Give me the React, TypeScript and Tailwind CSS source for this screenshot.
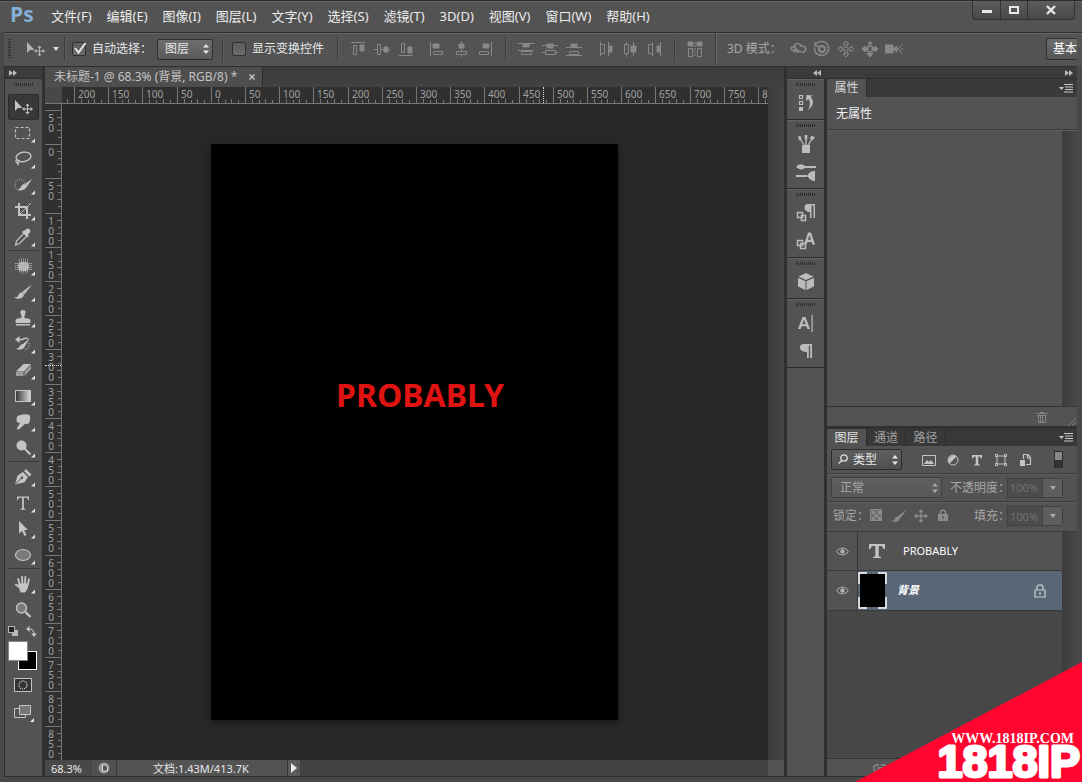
import React, { useState } from 'react';

const menus = ['文件(F)', '编辑(E)', '图像(I)', '图层(L)', '文字(Y)', '选择(S)', '滤镜(T)', '3D(D)', '视图(V)', '窗口(W)', '帮助(H)'];

const topMarks = [200, 150, 100, 50, 0, 50, 100, 150, 200, 250, 300, 350, 400, 450, 500, 550, 600, 650, 700, 750, 800];
const sideMarks = [50, 0, 50, 100, 150, 200, 250, 300, 350, 400, 450, 500, 550, 600, 650, 700, 750, 800, 850];

interface ToolDef {
    name: string;
    icon: React.ReactNode;
    single?: boolean;
}

const moveCross = (
    <path d="M14.5 6.500l2 2.500h-1.500v2.500h2.500V10l2.500 2-2.500 2v-1.500h-2.500V15h1.500l-2 2.500-2-2.500H14v-2.500h-2.500V14L9 12l2.500-2v1.500H14V9h-1.500z" />
);

const toolGroups: ToolDef[][] = [
    [
        { name: '移动', single: true, icon: <><path d="M2 3v11l3-3h4.500z" />{moveCross}</> },
        { name: '矩形选框', icon: <path d="M2.500 4.500h14v11h-14z" fill="none" stroke="currentColor" strokeWidth="1.200" strokeDasharray="3 2" /> },
        {
            name: '套索',
            icon: <g fill="none" stroke="currentColor" strokeWidth="1.400"><ellipse cx="10.500" cy="8" rx="7.500" ry="4.700" transform="rotate(-10 10 8)" /><path d="M4 11c-2 1-1 3 .8 2.600s2-2.400 0-2.400M5 13.500c.8 1 .2 2-.6 2.500" /></g>,
        },
        {
            name: '快速选择',
            icon: <><ellipse cx="7" cy="10" rx="5" ry="5.500" fill="none" stroke="currentColor" strokeDasharray="1 1.300" /><path d="M19 4l-7 5 2 2.500zM11.500 9c-2 0-3.500 2-4 4-1 1-2 1-3 .9 2 2 7.500 2 9.500-2.600z" /></>,
        },
        {
            name: '裁剪',
            icon: <><path d="M6 2v12h12M2 6h12v12" fill="none" stroke="currentColor" strokeWidth="2" /><path d="M7 13L18 2" stroke="currentColor" /></>,
        },
        {
            name: '吸管',
            icon: <><path d="M11 6l3 3-7.500 7.500-4 1.500 1-4z" fill="none" stroke="currentColor" strokeWidth="1.200" /><path d="M10 4l1.500-.5L14 1.800c2-.8 4 1.200 3.200 3.200L15 7.500l.8 1.500-1.300 1.300L9 5z" /></>,
        },
    ],
    [
        {
            name: '污点修复',
            icon: <><rect x="5" y="6" width="11" height="9" rx="4" fillOpacity=".8" /><path d="M6.500 3v14M8.500 2.500v15M10.500 2.500v15M12.500 2.500v15M14.500 3v14M2 7.500h17M2 9.500h17M2 11.500h17M2 13.500h17" stroke="currentColor" strokeWidth=".7" strokeDasharray="1.500 .5" /></>,
        },
        { name: '画笔', icon: <path d="M19 2.500l-10 7.500 2.300 2.500zM9 10.500c-2.500 0-3.500 2-4 3.500-1 1.400-2.200 1.300-4 1.200 2.800 2.500 9 2 10-2.400z" /> },
        { name: '仿制图章', icon: <path d="M10 2c1.800 0 2.900 1.300 2.600 3-.3 1.500-1.200 2.500-1.200 4.500 1 1.200 6 .8 6 2.500v3H2.600v-3c0-1.700 5-1.300 6-2.500 0-2-.9-3-1.200-4.500C7.100 3.300 8.200 2 10 2zM3 16h14v1.400H3z" /> },
        {
            name: '历史记录画笔',
            icon: <><path d="M17 4l-7 6 2 2zM10 10c-2 0-3.500 2-4 3.500-1 1-2 1.200-3 1.100 2 2 8 1.400 9-2.600z" /><path d="M5 5.500h4c2-1 4-1.500 6-1" fill="none" stroke="currentColor" strokeWidth="1.500" /><path d="M2 5.500L6.500 2v7z" /><path d="M16 9c1 3-.5 6-4 6.500" fill="none" stroke="currentColor" strokeDasharray="1 1" /></>,
        },
        {
            name: '橡皮擦',
            icon: <><path d="M3 11.500L10.500 4h7.500L11 11.500z" /><path d="M3 12v4h7.500v-4zM11.500 12v4L18 9V5z" fillOpacity=".65" /></>,
        },
        {
            name: '渐变',
            icon: <><defs><linearGradient id="tool-grad"><stop offset="0" stopColor="#333" /><stop offset="1" stopColor="#ddd" /></linearGradient></defs><rect x="2.500" y="4.500" width="15" height="11" fill="url(#tool-grad)" stroke="currentColor" /></>,
        },
        { name: '涂抹', icon: <path d="M4 5c2-3 10-3.500 12.500-2 1 2 1 5-.5 8-1 1.500-3 1-4 .8L6 17.500 3.500 17l4-6.500c-1 1-2.500 1-2.800-.4C3.200 9.500 3 8 4 7.500 3.300 7 3.300 6 4 5z" /> },
        { name: '减淡', icon: <><circle cx="8.500" cy="7.500" r="5" /><path d="M11.500 10.500l6 6" stroke="currentColor" strokeWidth="2" /></> },
    ],
    [
        {
            name: '钢笔',
            icon: <><path d="M2 17.500l2.500-9L10 5l5 5-3.500 5.300zM11 4l2-2 5.500 5.500-2 2z" /><path d="M2.500 17l5.500-5.500" stroke="#535353" /><circle cx="8.800" cy="10.800" r="1.400" fill="#535353" /></>,
        },
        { name: '横排文字', icon: <path d="M4 3.500h12v3.800h-.9c-.3-2-1-2.500-2.300-2.500h-1.900v9.700c0 1 .4 1.300 1.800 1.400v.8H7.300v-.8c1.400-.1 1.800-.4 1.800-1.400V4.800H7.200c-1.300 0-2 .5-2.300 2.500H4z" /> },
        { name: '路径选择', icon: <path d="M6 2v12.500l3-2.600 2.500 5 2-1-2.400-4.900H15z" /> },
        { name: '椭圆', icon: <ellipse cx="10" cy="10" rx="7.500" ry="5.500" fillOpacity=".35" stroke="currentColor" strokeWidth="1.200" /> },
    ],
    [
        {
            name: '抓手',
            icon: <g stroke="currentColor" strokeLinecap="round"><path d="M6 10h9l-1 5-2 3H8z" /><path d="M7 11L5.200 5M9.500 10L9 3M12 10l.4-7M14.500 11L16 5.500M7.500 14L2.800 10.500" strokeWidth="1.900" /></g>,
        },
        { name: '缩放', single: true, icon: <><circle cx="8.500" cy="8" r="5" fillOpacity=".35" stroke="currentColor" strokeWidth="1.400" /><path d="M12.500 12l5 5" stroke="currentColor" strokeWidth="2.400" /></> },
    ],
];

const ToolButton: React.FC<{ tool: ToolDef; active: boolean; onClick: () => void }> = ({ tool, active, onClick }) => (
    <button
        type="button"
        aria-label={tool.name}
        onClick={onClick}
        className={`block h-[26px] w-[31px] rounded-xs border ${active ? 'border-[#2c2c2c] bg-[#383838]' : 'border-transparent'}`}
    >
        <svg viewBox="0 0 30 26" className="-mt-px h-[26px] w-[30px] text-[#c4c4c4]" fill="currentColor">
            <g transform="translate(4 3)">{tool.icon}</g>
            {!tool.single && <path d="M26 18.500v4h-4z" fill="#e4e4e4" />}
        </svg>
    </button>
);

const Grip = () => (
    <div className="mx-auto h-[3px] w-5 bg-[repeating-linear-gradient(90deg,#2e2e2e_0_1px,transparent_1px_2px)]" />
);

const Divider = () => <div className="h-6 w-px shrink-0 bg-[#3c3c3c] shadow-[1px_0_0_#5e5e5e]" />;

const Arrows = () => (
    <svg viewBox="0 0 6 10" className="pointer-events-none absolute top-1/2 right-1 h-[10px] w-[6px] -translate-y-1/2" fill="currentColor">
        <path d="M3 0l3 3.500H0zM3 10L0 6.500h6z" />
    </svg>
);

const MenuGlyph = () => (
    <button type="button" aria-label="面板菜单" className="mr-1 ml-auto text-[#c8c8c8]">
        <svg viewBox="0 0 14 9" className="h-[9px] w-[14px]" fill="currentColor">
            <path d="M0 3h5L2.500 6zM5 0h9v1H5zM6 2.500h8v1H6zM6 5h8v1H6zM5 7.500h9v1H5z" />
        </svg>
    </button>
);

const Check: React.FC<{ label: string; defaultChecked?: boolean }> = ({ label, defaultChecked }) => (
    <label className="flex shrink-0 items-center gap-[6px]">
        <span className="relative flex">
            <input
                type="checkbox"
                defaultChecked={defaultChecked}
                className="peer size-[14px] appearance-none rounded-xs border border-[#2f2f2f] bg-linear-to-b from-[#5c5c5c] to-[#6c6c6c]"
            />
            <svg viewBox="0 0 14 14" className="pointer-events-none absolute inset-0 hidden peer-checked:block">
                <path d="M3 6l3.500 4.500L13.500 1" fill="none" stroke="#e6e6e6" strokeWidth="2" />
            </svg>
        </span>
        {label}
    </label>
);

const alignIcons: Record<string, React.ReactNode> = {
    顶对齐: <><path d="M2 2.500h14M4.500 5.500h3v9h-3z" /><path d="M11 5h4v6h-4z" fill="currentColor" /></>,
    垂直居中: <><path d="M1 9.500h3M8 9.500h9M4.500 4.500h3v10h-3z" /><path d="M11 7h4v5h-4z" fill="currentColor" /></>,
    底对齐: <><path d="M2 15.500h14M4.500 3.500h3v9h-3z" /><path d="M11 7h4v6h-4z" fill="currentColor" /></>,
    左对齐: <><path d="M2.500 2v14M5.500 11.500h9v3h-9z" /><path d="M5 4h6v4H5z" fill="currentColor" /></>,
    水平居中: <><path d="M9.500 1v3M9.500 8v3M9.500 15v2M4.500 11.500h10v3h-10z" /><path d="M7 4h5v4H7z" fill="currentColor" /></>,
    右对齐: <><path d="M15.500 2v14M3.500 11.500h9v3h-9z" /><path d="M7 4h6v4H7z" fill="currentColor" /></>,
    按顶分布: <><path d="M1 3.500h16M1 10.500h16M4.500 11.500h10v3h-10z" /><path d="M6 4h6v3H6z" fill="currentColor" /></>,
    按垂直居中分布: <><path d="M1 5.500h16M1 12.500h3M14 12.500h3M4.500 10.500h10v4h-10z" /><path d="M6 4h6v4H6z" fill="currentColor" /></>,
    按底分布: <><path d="M1 7.500h16M1 15.500h16M4.500 11.500h9v3h-9z" /><path d="M6 4h6v3H6z" fill="currentColor" /></>,
    按左分布: <><path d="M3.500 2v14M11.500 2v14M3.500 4.500h4v9h-4z" /><path d="M12 6h3v6h-3z" fill="currentColor" /></>,
    按水平居中分布: <><path d="M5.500 2v2M5.500 14v3M12.500 2v14M3.500 4.500h4v9h-4z" /><path d="M10 6h5v6h-5z" fill="currentColor" /></>,
    按右分布: <><path d="M7.500 2v14M15.500 2v14M3.500 4.500h4v9h-4z" /><path d="M12 6h3v6h-3z" fill="currentColor" /></>,
    自动对齐: <><path d="M2.500 8.500h4v8h-4zM11.500 8.500h4v8h-4z" /><path d="M2 2h5v4H2zM11 2h5v4h-5z" fill="currentColor" /><path d="M9 2v15" strokeDasharray="2 1" /></>,
};

const IconButton: React.FC<{ label: string; children: React.ReactNode }> = ({ label, children }) => (
    <button type="button" aria-label={label} className="flex w-6 shrink-0 justify-center text-[#888]">
        <svg viewBox="0 0 18 18" className="size-[18px]" fill="none" stroke="currentColor">{children}</svg>
    </button>
);

const AlignGroup: React.FC<{ names: string[] }> = ({ names }) => (
    <div className="flex">
        {names.map(name => <IconButton key={name} label={name}>{alignIcons[name]}</IconButton>)}
    </div>
);

const TitleBar = () => (
    <header className="flex h-8 shrink-0 border-t border-[#2b2b2b] bg-[#535353] shadow-[inset_0_1px_0_#656565]">
        <div className="w-[43px] pl-[10px] font-['Open_Sans',sans-serif] text-[21px] leading-[27px] font-bold text-[#84afd6]">Ps</div>
        <nav className="flex items-center gap-[7px] pl-1 text-[13px] text-[#ececec]">
            {menus.map(menu => (
                <button key={menu} type="button" className="px-1 whitespace-nowrap">{menu}</button>
            ))}
        </nav>
        <div className="mr-[7px] ml-auto flex h-[19px] divide-x divide-[#333] rounded-b-sm border border-t-0 border-[#333] bg-linear-to-b from-[#5c5c5c] to-[#484848] text-[#e8e8e8]">
            <button type="button" aria-label="最小化" className="flex w-[28px] items-center justify-center">
                <svg viewBox="0 0 10 10" className="size-[10px]"><path d="M0 5h10v3H0z" fill="currentColor" /></svg>
            </button>
            <button type="button" aria-label="最大化" className="flex w-[27px] items-center justify-center">
                <svg viewBox="0 0 10 10" className="size-[10px]"><path d="M1 2h8v6H1z" fill="none" stroke="currentColor" strokeWidth="2" /></svg>
            </button>
            <button type="button" aria-label="关闭" className="flex w-[46px] items-center justify-center">
                <svg viewBox="0 0 10 10" className="size-[10px]"><path d="M1 1l8 8M9 1L1 9" stroke="currentColor" strokeWidth="2.400" /></svg>
            </button>
        </div>
    </header>
);

const OptionsBar = () => (
    <div className="ml-[4px] flex h-[34px] shrink-0 items-center overflow-hidden border-t border-[#2f2f2f] bg-[#535353] pb-px text-[12px] text-[#e8e8e8] shadow-[inset_0_1px_0_#666]">
        <div className="ml-1 h-5 w-[3px] bg-[repeating-linear-gradient(#333_0_1px,transparent_1px_2px)]" />
        <button type="button" aria-label="当前工具" className="ml-[14px] flex items-center gap-1 text-[#b4b4b4]">
            <svg viewBox="0 0 20 20" className="size-5" fill="currentColor"><path d="M2 3v11l3-3h4.500z" />{moveCross}</svg>
            <svg viewBox="0 0 6 4" className="ml-1 h-1 w-[6px]" fill="#e0e0e0"><path d="M0 0h6L3 4z" /></svg>
        </button>
        <div className="ml-[5px] flex items-center"><Divider /></div>
        <div className="ml-[7px] w-[85px]"><Check label="自动选择：" defaultChecked /></div>
        <div className="relative">
            <select aria-label="自动选择目标" className="h-[21px] w-14 appearance-none rounded-xs border border-[#2f2f2f] bg-linear-to-b from-[#6e6e6e] to-[#5a5a5a] pl-[7px]">
                <option>图层</option>
                <option>组</option>
            </select>
            <Arrows />
        </div>
        <div className="ml-[9px] flex items-center gap-[9px]">
            <Divider />
            <div className="w-24"><Check label="显示变换控件" /></div>
            <Divider />
        </div>
        <div className="ml-[8px] flex items-center gap-[7px]">
            <AlignGroup names={['顶对齐', '垂直居中', '底对齐']} />
            <AlignGroup names={['左对齐', '水平居中', '右对齐']} />
        </div>
        <div className="ml-2 flex items-center gap-2">
            <Divider />
            <AlignGroup names={['按顶分布', '按垂直居中分布', '按底分布']} />
            <AlignGroup names={['按左分布', '按水平居中分布', '按右分布']} />
            <Divider />
            <AlignGroup names={['自动对齐']} />
            <div className="h-8 w-px bg-[#3c3c3c] shadow-[1px_0_0_#666]" />
        </div>
        <span className="ml-[11px] w-[59px] shrink-0 whitespace-nowrap text-[#a8a8a8]">3D 模式：</span>
        <div className="flex">
            <IconButton label="旋转 3D 对象">
                <path d="M6 11C-1 9 3 6 5.500 7 5 3 11 2 11.500 6c4-1 7 3 4 5.500-3 2-7-.5-9-3.500l-1 3.500 5 .500" strokeWidth="1.600" />
            </IconButton>
            <IconButton label="滚动 3D 对象">
                <path d="M3 4c3-4 10-3 12 1.500 2 5-1 9.500-6 10C3 15.500 1 11 1.500 7.500M2 2v4h4" strokeWidth="1.500" /><circle cx="9" cy="9" r="3" strokeWidth="2" />
            </IconButton>
            <IconButton label="拖动 3D 对象">
                <path d="M9 1l3 3h-2v4h4V6l3 3-3 3v-2h-4v4h2l-3 3-3-3h2v-4H4v2L1 9l3-3v2h4V4H6z" />
            </IconButton>
            <IconButton label="滑动 3D 对象">
                <path d="M9 1.500l2 2.500H7zM9 17l3-3.500H6zM1 9l3-3v2h3v2H4v2zM17 9l-3-3v2h-3v2h3v2z" fill="currentColor" /><circle cx="9" cy="9" r="3" strokeWidth="1.500" />
            </IconButton>
            <IconButton label="缩放 3D 对象">
                <path d="M0 5h8v8H0zM8 9l4-3v6z" fill="currentColor" /><path d="M17.500 4L13 9l4.500 5M17 8v2" />
            </IconButton>
        </div>
        <button type="button" className="mr-[5px] ml-auto h-[22px] w-[31px] shrink-0 rounded-l-xs border border-r-0 border-[#2f2f2f] bg-linear-to-b from-[#6c6c6c] to-[#565656] pl-[6px] text-left whitespace-nowrap text-white">
            基本
        </button>
    </div>
);

const Toolbox = () => {
    const [active, setActive] = useState('移动');

    return (
        <aside className="flex w-[37px] shrink-0 flex-col bg-[#535353] text-[#c4c4c4]">
            <div className="flex h-3 shrink-0 items-center border-b border-[#2f2f2f] bg-[#3b3b3b] pl-1">
                <svg viewBox="0 0 8 6" className="h-[6px] w-2" fill="#bbb"><path d="M0 0l4 3-4 3zM4 0l4 3-4 3z" /></svg>
            </div>
            <div className="pt-1 pb-2"><Grip /></div>
            <div className="pl-[3px]">
                {toolGroups.map((group, i) => (
                    <div key={i}>
                        {i > 0 && <div className="mr-[3px] mb-[2px] h-px bg-[#3a3a3a]" />}
                        {group.map(tool => (
                            <ToolButton key={tool.name} tool={tool} active={tool.name === active} onClick={() => setActive(tool.name)} />
                        ))}
                    </div>
                ))}
            </div>
            <div className="flex justify-between px-[3px] pt-[3px] pr-[5px]">
                <button type="button" aria-label="默认颜色">
                    <svg viewBox="0 0 11 11" className="size-[11px]"><path d="M4 4h6v6H4z" fill="#bbb" /><path d="M.5.5h6v6h-6z" fill="#222" stroke="#bbb" /></svg>
                </button>
                <button type="button" aria-label="切换颜色">
                    <svg viewBox="0 0 11 11" className="size-[11px]" fill="#c4c4c4"><path d="M3 3c3 0 5 1 5 5" fill="none" stroke="#c4c4c4" strokeWidth="1.200" /><path d="M0 3l3.500-3v6zM8 11L5 7.500h6z" /></svg>
                </button>
            </div>
            <div className="relative mt-1 ml-[3px] h-[29px] w-[29px]">
                <button type="button" aria-label="背景色" className="absolute right-0 bottom-0 size-[19px] border border-white bg-black" />
                <button type="button" aria-label="前景色" className="absolute top-0 left-0 size-5 border border-[#888] bg-white" />
            </div>
            <button type="button" aria-label="快速蒙版" className="mt-2 ml-[9px]">
                <svg viewBox="0 0 18 14" className="h-[14px] w-[18px]" fill="none" stroke="#c4c4c4"><path d="M.5.5h17v13H.5z" fill="#333" /><circle cx="9" cy="7" r="4" strokeWidth="1.500" strokeDasharray="1 1" /></svg>
            </button>
            <button type="button" aria-label="屏幕模式" className="mt-3 ml-2">
                <svg viewBox="0 0 22 18" className="h-[18px] w-[22px]" fill="#535353" stroke="#c4c4c4"><path d="M1.500 4.500h11v9h-11z" /><path d="M6.500 1.500h11v9h-11z" fill="#777" /><path d="M21 14v4h-4z" fill="#e4e4e4" stroke="none" /></svg>
            </button>
        </aside>
    );
};

const TopRuler = () => (
    <div className="relative flex h-[17px] shrink-0 overflow-hidden border-b border-[#777] bg-[#303030] text-[10px] text-[#a0a0a0]">
        <div className="w-[17px] shrink-0 bg-[#484848]" />
        <div className="flex w-3 shrink-0 items-end justify-end">
            <div className="h-1 w-[7px] border-l border-[#777]" />
        </div>
        {topMarks.map((mark, i) => (
            <div key={i} className={`relative flex shrink-0 items-end border-l border-[#777] ${i % 5 === 2 ? 'w-[35px]' : 'w-[34px]'}`}>
                <span className="absolute top-0 left-[3px] leading-[14px]">{mark}</span>
                <div className="h-1 flex-1" />
                <div className="h-1 flex-1 border-l border-[#777]" />
                <div className="h-[3px] flex-1 border-l border-[#777]" />
                <div className="h-1 flex-1 border-l border-[#777]" />
                <div className="h-[3px] flex-1 border-l border-[#777]" />
            </div>
        ))}
        {/* pointer position */}
        <div className="absolute top-0 left-[498px] h-4 border-l border-dotted border-[#ddd]" />
    </div>
);

const SideRuler = () => (
    <div className="relative w-[17px] shrink-0 overflow-hidden border-r border-[#777] bg-[#303030] text-[10px] text-[#a0a0a0]">
        <div className="h-[6px]" />
        {sideMarks.map((mark, i) => (
            <div key={i} className={`relative flex flex-col items-end border-t border-[#777] ${i % 5 === 2 ? 'h-[35px]' : 'h-[34px]'}`}>
                <span className="absolute top-[2px] left-[3px] w-[6px] text-center leading-[10px] break-all">{mark}</span>
                <div className="w-1 flex-1" />
                <div className="w-1 flex-1 border-t border-[#777]" />
                <div className="w-[3px] flex-1 border-t border-[#777]" />
                <div className="w-1 flex-1 border-t border-[#777]" />
                <div className="w-[3px] flex-1 border-t border-[#777]" />
            </div>
        ))}
        {/* pointer position */}
        <div className="absolute top-[261px] left-0 w-4 border-t border-dotted border-[#ddd]" />
    </div>
);

const DocumentArea = () => (
    <main className="flex min-w-0 flex-1 flex-col">
        <div className="flex h-5 shrink-0 bg-linear-to-b from-[#3a3a3a] to-[#424242]">
            <div className="flex items-center gap-3 border-r border-[#2f2f2f] bg-[#4e4e4e] pr-[7px] pl-[9px] text-[12px] whitespace-nowrap text-[#c4c4c4]">
                未标题-1 @ 68.3% (背景, RGB/8) *
                <button type="button" aria-label="关闭文档">
                    <svg viewBox="0 0 6 6" className="size-[6px]"><path d="M.5.5l5 5M5.500.500l-5 5" stroke="#ccc" strokeWidth="1.200" /></svg>
                </button>
            </div>
        </div>
        <div className="flex min-h-0 flex-1">
            <div className="flex min-w-0 flex-1 flex-col">
                <TopRuler />
                <div className="flex min-h-0 flex-1">
                    <SideRuler />
                    <div className="flex min-w-0 flex-1 items-center justify-center overflow-hidden bg-[#282828] pr-px">
                        <div className="h-[576px] w-[407px] shrink-0 bg-black pt-[231px] pl-[11px] text-center font-['Noto_Sans',sans-serif] text-[32px] leading-[40px] font-bold text-[#e01313] shadow-[0_3px_6px_#181818]">
                            PROBABLY
                        </div>
                    </div>
                </div>
            </div>
            <div className="w-4 shrink-0 bg-linear-to-r from-[#3a3a3a] to-[#464646]" />
        </div>
        <footer className="flex h-4 shrink-0 items-stretch bg-[#424242] text-[11px] leading-[17px] text-[#e8e8e8]">
            <div className="w-[47px] bg-[#484848] pl-[6px]">68.3%</div>
            <div className="flex w-6 items-center justify-center bg-[#505050]">
                <svg viewBox="0 0 12 12" className="size-3"><circle cx="6" cy="6" r="5.500" fill="#999" /><path d="M4.500 3h3l2 2v4h-5z" fill="#555" stroke="#eee" strokeWidth=".8" /></svg>
            </div>
            <div className="w-[171px] border-l border-[#3a3a3a] bg-[#535353] pl-9">文档:1.43M/413.7K</div>
            <button type="button" aria-label="状态选项" className="flex w-[13px] items-center justify-center border-l border-[#333] bg-[#5a5a5a]">
                <svg viewBox="0 0 6 10" className="h-[10px] w-[6px]"><path d="M0 0l6 5-6 5z" fill="#e8e8e8" /></svg>
            </button>
            <div className="ml-auto w-4 bg-[#535353]" />
        </footer>
    </main>
);

const dockGroups: { name: string; icon: React.ReactNode }[][] = [
    [
        { name: '历史记录', icon: <><path d="M3.500 2.500h3v3h-3zM3.500 8.500h3v3h-3z" fill="none" stroke="currentColor" strokeWidth="1.200" /><path d="M3 14h4v4H3z" /><path d="M10 8l.5-6 6 .5-2 1.500c4 4 3 9-2.500 13 2.500-4 2.500-8 .5-11z" /></> },
    ],
    [
        { name: '画笔预设', icon: <><path d="M6 11h8v8H6z" /><path d="M8 11L3.500 4M10 11V3M12 11l4-6" stroke="currentColor" strokeWidth="1.300" /><path d="M2 2l3 .5.500 4L3 6zM8.700 1h2.600v4.500H8.700zM14 5l1-3 4 1-2 3z" /></> },
        { name: '画笔', icon: <><path d="M0 5c3-4 7-3 9-1h11v2H9c-2 2-6 2-9-1zM0 13h11v2H0z" /><path d="M11 14c2-4 5-5 8-5v10c-3 0-6-2-8-5z" /></> },
    ],
    [
        { name: '段落样式', icon: <><path d="M12 1h7v14h-1.500V2.500h-2V15H14V9C7 9 7 1 12 1z" /><path d="M1.500 9.500h5v5h-5zM5.500 12.500h4v5h-4z" fill="none" stroke="currentColor" strokeWidth="1.500" /></> },
        { name: '字符样式', icon: <><path d="M12 1.500h3l4 12h-2.500l-1-2.600h-4l-1 2.600H8zM13.500 4L12 8.800h3z" fillRule="evenodd" /><path d="M1.500 9.500h5v5h-5zM4.500 12.500h5v5h-5z" fill="none" stroke="currentColor" strokeWidth="1.500" /></> },
    ],
    [
        { name: '3D', icon: <><path d="M10 1l7.500 3.500L10 8 2.500 4.500z" /><path d="M2 5.700l7.500 3.500V18L2 14.500zM18 5.700l-7.500 3.500V18l7.500-3.500z" /></> },
    ],
    [
        { name: '字符', icon: <><path d="M6.500 4h3L14 16h-2.600l-1-2.800H5.600l-1 2.800H2zM8 6.500l-1.700 4.800h3.400zM15.500 2h1.200v17h-1.200z" fillRule="evenodd" /></> },
        { name: '段落', icon: <path d="M8 3h8v14h-1.800V4.500h-1.400V17H11v-6C2 11 2 3 8 3z" /> },
    ],
];

const Dock = () => (
    <aside className="w-[37px] shrink-0 bg-[#535353]">
        {dockGroups.map((group, i) => (
            <div key={i} className="border-b border-[#2c2c2c] pt-1 pb-[2px] shadow-[inset_0_1px_0_#626262]">
                <Grip />
                <div className="pt-[3px] pl-px">
                    {group.map(item => (
                        <button key={item.name} type="button" aria-label={item.name} className="flex h-7 w-full items-center justify-center text-[#bcbcbc]">
                            <svg viewBox="0 0 20 20" className="size-5" fill="currentColor">{item.icon}</svg>
                        </button>
                    ))}
                </div>
            </div>
        ))}
    </aside>
);

const PropertiesPanel = () => (
    <section className="flex h-[347px] shrink-0 flex-col text-[12px]">
        <div className="flex h-[18px] shrink-0 items-center bg-[#3a3a3a]">
            <h2 className="h-full w-10 border-r border-[#2c2c2c] bg-[#535353] text-center leading-[18px] text-[#d8d8d8]">属性</h2>
            <MenuGlyph />
        </div>
        <div className="h-[33px] shrink-0 border-b border-[#3a3a3a] bg-[#535353] pl-[9px] leading-[33px] text-[#f0f0f0]">无属性</div>
        <div className="flex flex-1 border-t border-[#5e5e5e] bg-[#535353]">
            <div className="ml-auto w-[15px] bg-linear-to-r from-[#3c3c3c] to-[#484848]" />
        </div>
        <div className="flex h-5 shrink-0 items-center justify-end border-t border-[#333] bg-[#535353] pr-px">
            <button type="button" aria-label="删除">
                <svg viewBox="0 0 12 12" className="mr-[18px] size-3" fill="none" stroke="#858585"><path d="M.5 2.500h11M4 1.500h4M1.500 4.500h9M2.500 5v6.500h7V5M4.500 5v6M6.500 5v6" /></svg>
            </button>
            <div className="size-[10px] self-end bg-[repeating-linear-gradient(135deg,transparent_0_2px,#777_2px_3px)] [clip-path:polygon(100%_0,100%_100%,0_100%)]" />
        </div>
    </section>
);

const filterIcons: Record<string, React.ReactNode> = {
    像素: <><path d="M1.500 3.500h13v10h-13z" fill="none" stroke="currentColor" /><path d="M3 12l3-4 2 2 2-2 3 4z" /></>,
    调整: <><circle cx="8" cy="8" r="5" fill="none" stroke="currentColor" /><path d="M4.500 11.500A5 5 0 0 1 11.500 4.500z" /></>,
    文字: <path d="M3 3h10v3.500h-1C11.500 5 11 4.500 9.300 4.500v7c0 .8.500 1 1.500 1v1H5.200v-1c1 0 1.500-.2 1.500-1v-7C5 4.500 4.500 5 4 6.500H3z" />,
    形状: <><path d="M4 4h8v8H4z" fill="none" stroke="currentColor" /><path d="M2.500 2.500h2v2h-2zM11.500 2.500h2v2h-2zM2.500 11.500h2v2h-2zM11.500 11.500h2v2h-2z" fill="#535353" stroke="currentColor" /></>,
    智能对象: <><path d="M6.500 7V2.500H11l2.500 3v7H9M10.500 2.500V6h3" fill="none" stroke="currentColor" strokeWidth="1.200" /><path d="M3 8h5v6H3z" /></>,
};

const Percent: React.FC<{ id: string; label: string }> = ({ id, label }) => (
    <div className="flex items-center">
        <label htmlFor={id} className="w-[57px] text-[12px] whitespace-nowrap text-[#a6a6a6]">{label}</label>
        <input id={id} defaultValue="100%" disabled className="h-5 w-9 border border-[#404040] bg-[#4c4c4c] pl-[2px] text-[11px] text-[#727272]" />
        <button type="button" aria-label={`${label}滑块`} className="flex h-5 w-5 items-center justify-center rounded-r-xs border border-l-0 border-[#404040] bg-[#5e5e5e]">
            <svg viewBox="0 0 6 4" className="h-1 w-[6px]" fill="#aaa"><path d="M0 0h6L3 4z" /></svg>
        </button>
    </div>
);

const Eye = () => (
    <button type="button" aria-label="可见性" className="flex h-full w-[31px] shrink-0 items-center justify-center border-r border-[#333] bg-[#535353]">
        <svg viewBox="0 0 13 9" className="h-[9px] w-[13px]" fill="none" stroke="#b4b4b4"><path d="M.8 4.500C3 0 10 0 12.200 4.500 10 9 3 9 .8 4.500z" /><circle cx="6.500" cy="4.500" r="1.800" fill="#b4b4b4" /></svg>
    </button>
);

const LayersPanel = () => (
    <section className="flex min-h-0 flex-1 flex-col bg-[#535353] text-[12px]">
        <div className="flex h-[17px] shrink-0 items-center bg-[#383838] leading-[17px] text-[#a0a0a0]">
            <button type="button" className="h-full w-10 border-r border-[#2c2c2c] bg-[#535353] text-[#e0e0e0]">图层</button>
            <button type="button" className="h-full w-[39px] border-r border-[#2c2c2c]">通道</button>
            <button type="button" className="h-full w-10 border-r border-[#2c2c2c]">路径</button>
            <MenuGlyph />
        </div>
        <div className="flex h-7 shrink-0 items-center border-b border-[#3c3c3c] pr-[14px] pl-1">
            <div className="relative text-[#e8e8e8]">
                <svg viewBox="0 0 10 10" className="pointer-events-none absolute top-[5px] left-[7px] size-[10px]" fill="none" stroke="#ddd" strokeWidth="1.300"><circle cx="6" cy="4" r="3.200" /><path d="M4 6.500L.5 9.500" /></svg>
                <select aria-label="筛选类型" className="h-[21px] w-[71px] appearance-none rounded-xs border border-[#2c2c2c] bg-linear-to-b from-[#5e5e5e] to-[#505050] pl-[21px]">
                    <option>类型</option>
                    <option>名称</option>
                </select>
                <Arrows />
            </div>
            <div className="ml-[15px] flex text-[#c4c4c4]">
                {Object.entries(filterIcons).map(([name, icon]) => (
                    <button key={name} type="button" aria-label={name} className="flex w-6 justify-center">
                        <svg viewBox="0 0 16 16" className="size-4" fill="currentColor">{icon}</svg>
                    </button>
                ))}
            </div>
            <button type="button" aria-label="筛选开关" className="ml-auto flex h-[17px] w-[9px] items-start border border-[#2c2c2c] bg-[#333]">
                <span className="h-2 w-full bg-[#888]" />
            </button>
        </div>
        <div className="flex h-7 shrink-0 items-center justify-between border-b border-[#3c3c3c] pr-[14px] pl-1 shadow-[inset_0_1px_0_#5e5e5e]">
            <div className="relative text-[#a8a8a8]">
                <select aria-label="混合模式" className="h-[21px] w-[111px] appearance-none rounded-xs border border-[#404040] bg-linear-to-b from-[#606060] to-[#585858] pl-2">
                    <option>正常</option>
                    <option>正片叠底</option>
                </select>
                <Arrows />
            </div>
            <Percent id="opacity" label="不透明度：" />
        </div>
        <div className="flex h-[30px] shrink-0 items-center border-b border-[#3c3c3c] pr-[14px] pb-px pl-[6px] shadow-[inset_0_1px_0_#5e5e5e]">
            <span className="w-8 shrink-0 whitespace-nowrap text-[#a6a6a6]">锁定：</span>
            <div className="flex text-[#8c8c8c]">
                <button type="button" aria-label="锁定透明像素" className="flex w-[22px] justify-center">
                    <svg viewBox="0 0 12 12" className="size-3" fill="currentColor"><path d="M.5.500h11v11H.5z" fillOpacity=".5" stroke="currentColor" /><path d="M2 2h3v3H2zM8 2h3v3H8zM5 5h3v3H5zM2 8h3v3H2zM8 8h3v3H8z" /></svg>
                </button>
                <button type="button" aria-label="锁定图像像素" className="flex w-[23px] justify-center">
                    <svg viewBox="1 2 18 16" className="h-[14px] w-4" fill="currentColor"><path d="M19 2.500l-10 7.500 2.300 2.500zM9 10.500c-2.500 0-3.500 2-4 3.500-1 1.400-2.200 1.300-4 1.200 2.800 2.500 9 2 10-2.400z" /></svg>
                </button>
                <button type="button" aria-label="锁定位置" className="flex w-[22px] justify-center">
                    <svg viewBox="9 6.500 11 11" className="size-[14px]" fill="currentColor">{moveCross}</svg>
                </button>
                <button type="button" aria-label="全部锁定" className="flex w-[22px] justify-center">
                    <svg viewBox="0 0 12 12" className="size-3" fill="currentColor"><path d="M1 5h10v7H1z" /><path d="M3.500 5V3c0-2.500 5-2.500 5 0v2" fill="none" stroke="currentColor" strokeWidth="1.500" /><path d="M5.500 7h1v3h-1z" fill="#444" /></svg>
                </button>
            </div>
            <div className="ml-auto [&_label]:w-[33px]"><Percent id="fill" label="填充：" /></div>
        </div>
        <div className="flex min-h-0 flex-1 bg-[#474747]">
            <ul className="min-w-0 flex-1">
                <li className="flex h-[39px] items-center border-b border-[#3a3a3a] bg-[#535353]">
                    <Eye />
                    <svg viewBox="0 0 16 16" className="ml-[11px] size-4 shrink-0" fill="#c4c4c4"><path d="M0 1h16v5h-1.500C14 3.500 13 3 9.700 3v9.500c0 1 .6 1.300 2.300 1.400V15H4v-1.100c1.700-.1 2.300-.4 2.300-1.400V3C3 3 2 3.500 1.500 6H0z" /></svg>
                    <span className="ml-[18px] text-[11px] text-white">PROBABLY</span>
                </li>
                <li className="flex h-10 items-center border-b border-[#3a3a3a] bg-[#596675]">
                    <Eye />
                    <svg viewBox="0 0 29 37" className="h-[37px] w-[29px] shrink-0"><path d="M2 2h25v33H2z" fill="#000" /><path d="M1 12V1h8M20 1h8v11M28 25v11h-8M9 36H1V25" fill="none" stroke="#fff" strokeWidth="1.500" /></svg>
                    <span className="ml-[10px] text-[11px] font-bold text-white italic">背景</span>
                    <svg viewBox="0 0 12 14" className="mr-4 ml-auto h-[14px] w-3" fill="none" stroke="#c8ccd2" strokeWidth="1.200"><path d="M1 6h10v7H1zM3 6V3.500C3 0 9 0 9 3.500V6M6 8v3" /></svg>
                </li>
            </ul>
            <div className="w-[15px] shrink-0 bg-linear-to-r from-[#3c3c3c] to-[#484848]" />
        </div>
        <div className="flex h-[18px] shrink-0 items-center border-t border-[#333] bg-[#535353] pl-[46px]">
            <svg viewBox="0 0 14 8" className="h-2 w-[14px]" fill="none" stroke="#8c8c8c" strokeWidth="1.300"><path d="M6 1H3C0 1 0 7 3 7h3M8 1h3c3 0 3 6 0 6H8M4 4h6" /></svg>
        </div>
    </section>
);

const Watermark = () => (
    <div className="absolute right-0 bottom-0 h-[120px] w-[227px] text-white">
        <svg viewBox="0 0 227 120" className="size-full">
            <path d="M227 0v120H0z" fill="#ff0530" />
            <text x="219" y="81" textAnchor="end" fill="currentColor" className="font-['Liberation_Serif',serif] text-[14px] font-bold">WWW.1818IP.COM</text>
            <text x="225" y="115" textAnchor="end" fill="currentColor" stroke="currentColor" strokeWidth="3" strokeLinejoin="round" className="font-['Liberation_Sans',sans-serif] text-[45px] font-bold">1818IP</text>
        </svg>
    </div>
);

export default function App() {
    return (
        <div className="relative flex h-screen flex-col overflow-hidden bg-[#484848] font-['Noto_Sans','Noto_Sans_CJK_SC',sans-serif]">
            <TitleBar />
            <OptionsBar />
            <div className="mr-[5px] mb-[5px] ml-[4px] flex min-h-0 flex-1 border border-r-0 border-[#2f2f2f] bg-[#303030]">
                <Toolbox />
                <div className="w-[3px] shrink-0" />
                <DocumentArea />
                <div className="w-[3px] shrink-0" />
                <div className="flex w-[290px] shrink-0 flex-col">
                    <div className="flex h-3 shrink-0 items-center border-b border-[#2f2f2f] bg-[#3b3b3b] pr-1 pl-[26px]">
                        <svg viewBox="0 0 8 6" className="h-[6px] w-2" fill="#bbb"><path d="M4 0L0 3l4 3zM8 0L4 3l4 3z" /></svg>
                        <svg viewBox="0 0 8 6" className="ml-auto h-[6px] w-2" fill="#bbb"><path d="M0 0l4 3-4 3zM4 0l4 3-4 3z" /></svg>
                    </div>
                    <div className="flex min-h-0 flex-1">
                        <div className="flex bg-[#535353]"><Dock /></div>
                        <div className="flex min-w-0 flex-1 flex-col gap-[3px] pl-[3px]">
                            <PropertiesPanel />
                            <LayersPanel />
                        </div>
                    </div>
                </div>
            </div>
            <Watermark />
        </div>
    );
}
